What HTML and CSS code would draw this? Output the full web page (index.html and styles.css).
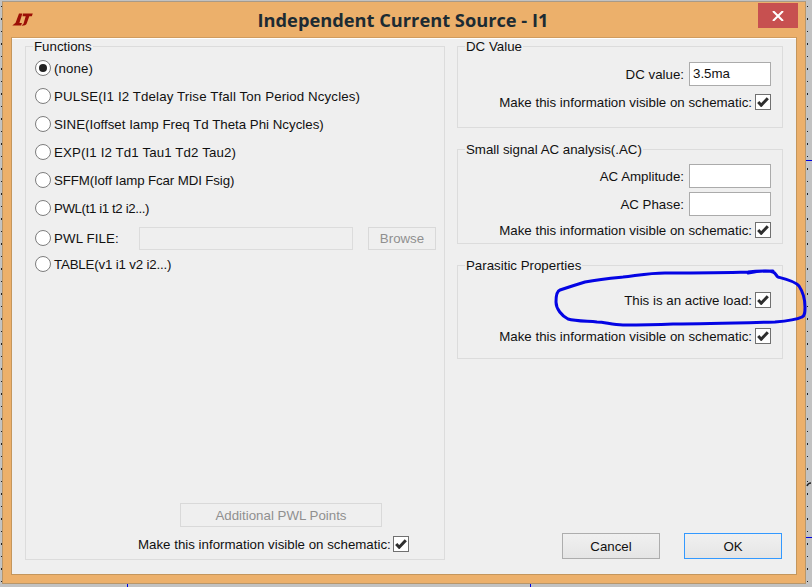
FILE: index.html
```html
<!DOCTYPE html>
<html lang="en">
<head>
<meta charset="utf-8">
<title>Independent Current Source - I1</title>
<link rel="stylesheet" href="styles.css">
</head>
<body>
<div class="window">
  <header class="titlebar">
    <svg class="logo" width="21" height="13" viewBox="0 0 21 13"><path d="M7 .5h3.400L7.400 10h2.600L9 12.500H.3L3.600 9.800zM11 .5h9.800l-1 2.700H17.300l-2.500 7c-.6 1.800-2.400 2.500-5.300 2.500l2-2 2.200-7.500h-3.200z" fill="#9c1006"/></svg>
    <h1 class="title">Independent Current Source - I1</h1>
    <div class="close"><svg width="12" height="10" viewBox="0 0 12 10"><path d="M1 0l5 5 5-5M1 10l5-5 5 5" fill="none" stroke="#fff" stroke-width="2"/></svg></div>
  </header>
  <main class="client">
    <fieldset class="group functions">
      <legend>Functions</legend>
      <div class="radios">
        <div class="radio-row"><span class="radio on"></span>(none)</div>
        <div class="radio-row"><span class="radio"></span>PULSE(I1 I2 Tdelay Trise Tfall Ton Period Ncycles)</div>
        <div class="radio-row sine"><span class="radio"></span>SINE(Ioffset Iamp Freq Td Theta Phi Ncycles)</div>
        <div class="radio-row"><span class="radio"></span>EXP(I1 I2 Td1 Tau1 Td2 Tau2)</div>
        <div class="radio-row sffm"><span class="radio"></span>SFFM(Ioff Iamp Fcar MDI Fsig)</div>
        <div class="radio-row pwl"><span class="radio"></span>PWL(t1 i1 t2 i2...)</div>
        <div class="radio-row file-row"><span class="radio"></span><span class="file-label">PWL FILE:</span><span class="file-input"></span><span class="btn disabled browse">Browse</span></div>
        <div class="radio-row table-row"><span class="radio"></span>TABLE(v1 i1 v2 i2...)</div>
      </div>
      <div class="functions-foot">
        <span class="btn disabled additional">Additional PWL Points</span>
        <div class="check-row"><span>Make this information visible on schematic:</span><span class="check"><svg width="12" height="10" viewBox="0 0 12 10"><path d="M1.200 5l3 3.200L10.800 1.200" fill="none" stroke="#2e2e2e" stroke-width="3"/></svg></span></div>
      </div>
    </fieldset>
    <div class="side">
      <fieldset class="group dc">
        <legend>DC Value</legend>
        <div class="field-row"><span>DC value:</span><span class="input">3.5ma</span></div>
        <div class="check-row"><span>Make this information visible on schematic:</span><span class="check"><svg width="12" height="10" viewBox="0 0 12 10"><path d="M1.200 5l3 3.200L10.800 1.200" fill="none" stroke="#2e2e2e" stroke-width="3"/></svg></span></div>
      </fieldset>
      <fieldset class="group ac">
        <legend>Small signal AC analysis(.AC)</legend>
        <div class="field-row"><span>AC Amplitude:</span><span class="input"></span></div>
        <div class="field-row"><span>AC Phase:</span><span class="input"></span></div>
        <div class="check-row"><span>Make this information visible on schematic:</span><span class="check"><svg width="12" height="10" viewBox="0 0 12 10"><path d="M1.200 5l3 3.200L10.800 1.200" fill="none" stroke="#2e2e2e" stroke-width="3"/></svg></span></div>
      </fieldset>
      <fieldset class="group parasitic">
        <legend>Parasitic Properties</legend>
        <div class="check-row"><span>This is an active load:</span><span class="check"><svg width="12" height="10" viewBox="0 0 12 10"><path d="M1.200 5l3 3.200L10.800 1.200" fill="none" stroke="#2e2e2e" stroke-width="3"/></svg></span></div>
        <div class="check-row"><span>Make this information visible on schematic:</span><span class="check"><svg width="12" height="10" viewBox="0 0 12 10"><path d="M1.200 5l3 3.200L10.800 1.200" fill="none" stroke="#2e2e2e" stroke-width="3"/></svg></span></div>
      </fieldset>
      <div class="actions">
        <span class="btn">Cancel</span>
        <span class="btn default">OK</span>
      </div>
    </div>
  </main>
</div>
<svg class="scribble" width="812" height="587" viewBox="0 0 812 587"><g stroke="#0000e0" stroke-width="1" fill="none"><path d="M806 160.500h6M806 537.500h6M127.500 584v3M530.500 584v3"/></g><path d="M807 486q1-3 4-3" fill="none" stroke="#222" stroke-width="1.500"/><path d="M748 273C758 271 768 270 773 272C776 273 776 276 778 277C786 279 795 281 799 286C803 292 805 300 805 307C805 312 805 316 802 317C796 320 788 321 775 322C740 323 705 324 673 324C650 325 635 325 623 325C612 325 605 322 597 322C585 321 575 321 568 319C562 316 556 309 556 302C556 296 557 291 560 290C566 288 572 286 585 282C600 279 612 278 623 277C640 275 650 273 665 273C690 273 720 273 748 272C758 271 768 271 773 271" fill="none" stroke="#0404e4" stroke-width="3" stroke-linecap="round"/></svg>
</body>
</html>
```
FILE: styles.css
```css
* { box-sizing: border-box; }
html, body { margin: 0; height: 100%; }
body {
  width: 812px;
  height: 587px;
  overflow: hidden;
  position: relative;
  background-color: #c2c2c2;
  background-image:
    repeating-linear-gradient(#222 0 1px, transparent 1px 12.5px),
    repeating-linear-gradient(#222 0 1px, transparent 1px 12.5px);
  background-size: 1px 578px, 1px 578px;
  background-position: 807px 6px, 1px 6px;
  background-repeat: no-repeat;
  font-family: "Liberation Sans", Arial, sans-serif;
  font-size: 13.3px;
  color: #111;
}
.window {
  position: absolute;
  left: 2px;
  top: 1px;
  width: 804px;
  height: 583px;
  display: flex;
  flex-direction: column;
  padding: 0 8px 8px;
  background: #ecb06b;
  border: 1px solid #b8966a;
  border-top-color: #a89a88;
}
.titlebar {
  height: 35px;
  flex: none;
  display: flex;
  align-items: center;
  justify-content: center;
  position: relative;
}
.logo { position: absolute; left: 1px; top: 11px; }
.title {
  margin: 0 2px 0 0;
  font: 700 18.25px "Open Sans", "Noto Sans", sans-serif;
  color: #1c2b33;
}
.close {
  position: absolute;
  right: -1px;
  top: 1px;
  width: 40px;
  height: 25px;
  background: #c75050;
  display: flex;
  align-items: center;
  justify-content: center;
}
.client {
  flex: 1;
  display: flex;
  gap: 12px;
  padding: 0 13px 14px 13px;
  background: #efefef;
  border: 1px solid #c4965c;
  border-top-color: #d09c5f;
  box-shadow: inset 0 1px 0 #fff;
}
.group {
  margin: 0;
  padding: 0;
  border: 1px solid #dcdcdc;
  min-width: 0;
}
.group legend {
  margin-left: 7px;
  padding: 0 1px;
  line-height: 17px;
  height: 16px;
}
.functions {
  width: 420px;
  display: flex;
  flex-direction: column;
}
.radios { display: flex; flex-direction: column; padding: 0 0 0 9px; letter-spacing: .12px; }
.radio-row { display: flex; align-items: center; height: 28px; gap: 3px; }
.sine { letter-spacing: 0; }
.sffm { letter-spacing: -.12px; }
.pwl { letter-spacing: -.4px; }
.file-row { height: 32px; }
.table-row { height: 20px; letter-spacing: -.17px; }
.radio {
  width: 16px;
  height: 16px;
  border-radius: 50%;
  border: 1px solid #7d7d7d;
  background: #fff;
  flex: none;
  position: relative;
}
.radio.on::after {
  content: "";
  position: absolute;
  left: 3px;
  top: 3px;
  width: 8px;
  height: 8px;
  border-radius: 50%;
  background: #222;
}
.file-label { width: 82px; }
.file-input {
  width: 214px;
  height: 23px;
  background: #efefef;
  border: 1px solid #dcdcdc;
}
.btn {
  display: flex;
  align-items: center;
  justify-content: center;
  border: 1px solid #adadad;
  background: linear-gradient(#f0f0f0, #e5e5e5);
  height: 26px;
  width: 98px;
}
.btn.default { border-color: #3399ff; }
.btn.disabled { background: #efefef; border-color: #d9d9d9; color: #8f8f8f; }
.browse { width: 68px; height: 23px; margin-left: 12px; letter-spacing: 0; }
.additional { width: 202px; height: 24px; }
.functions-foot {
  margin-top: auto;
  display: flex;
  flex-direction: column;
  align-items: flex-start;
  padding: 0 0 6px 155px;
  gap: 8px;
}
.functions-foot .additional { margin-left: -1px; }
.functions-foot .check-row { margin-left: -43px; gap: 2px; }
.check-row {
  display: flex;
  align-items: center;
  justify-content: flex-end;
  gap: 3px;
  height: 18px;
}
.check {
  width: 16px;
  height: 16px;
  border: 1px solid #707070;
  background: #fff;
  display: flex;
  align-items: center;
  justify-content: center;
  flex: none;
}
.side {
  width: 326px;
  display: flex;
  flex-direction: column;
}
.dc, .ac, .parasitic { padding: 0 11px 0 0; }
.dc { height: 90px; }
.dc .field-row { margin-top: 8px; }
.dc .check-row { margin-top: 7px; }
.ac { height: 103px; margin-top: 13px; }
.ac .field-row:first-of-type { margin-top: 7px; }
.ac .check-row { margin-top: 5px; }
.parasitic { height: 102px; margin-top: 13px; }
.parasitic .check-row { margin-top: 18px; }
.parasitic .check-row + .check-row { margin-top: 18px; }
.field-row {
  display: flex;
  align-items: center;
  justify-content: flex-end;
  gap: 5px;
  height: 24px;
  margin-top: 4px;
}
.input {
  width: 82px;
  height: 24px;
  background: #fff;
  border: 1px solid #ababab;
  padding: 0 3px;
  line-height: 22px;
}
.actions {
  margin-top: auto;
  display: flex;
  justify-content: flex-end;
  gap: 24px;
  padding: 0 1px 1px 0;
}
.scribble { position: absolute; left: 0; top: 0; pointer-events: none; }
```
